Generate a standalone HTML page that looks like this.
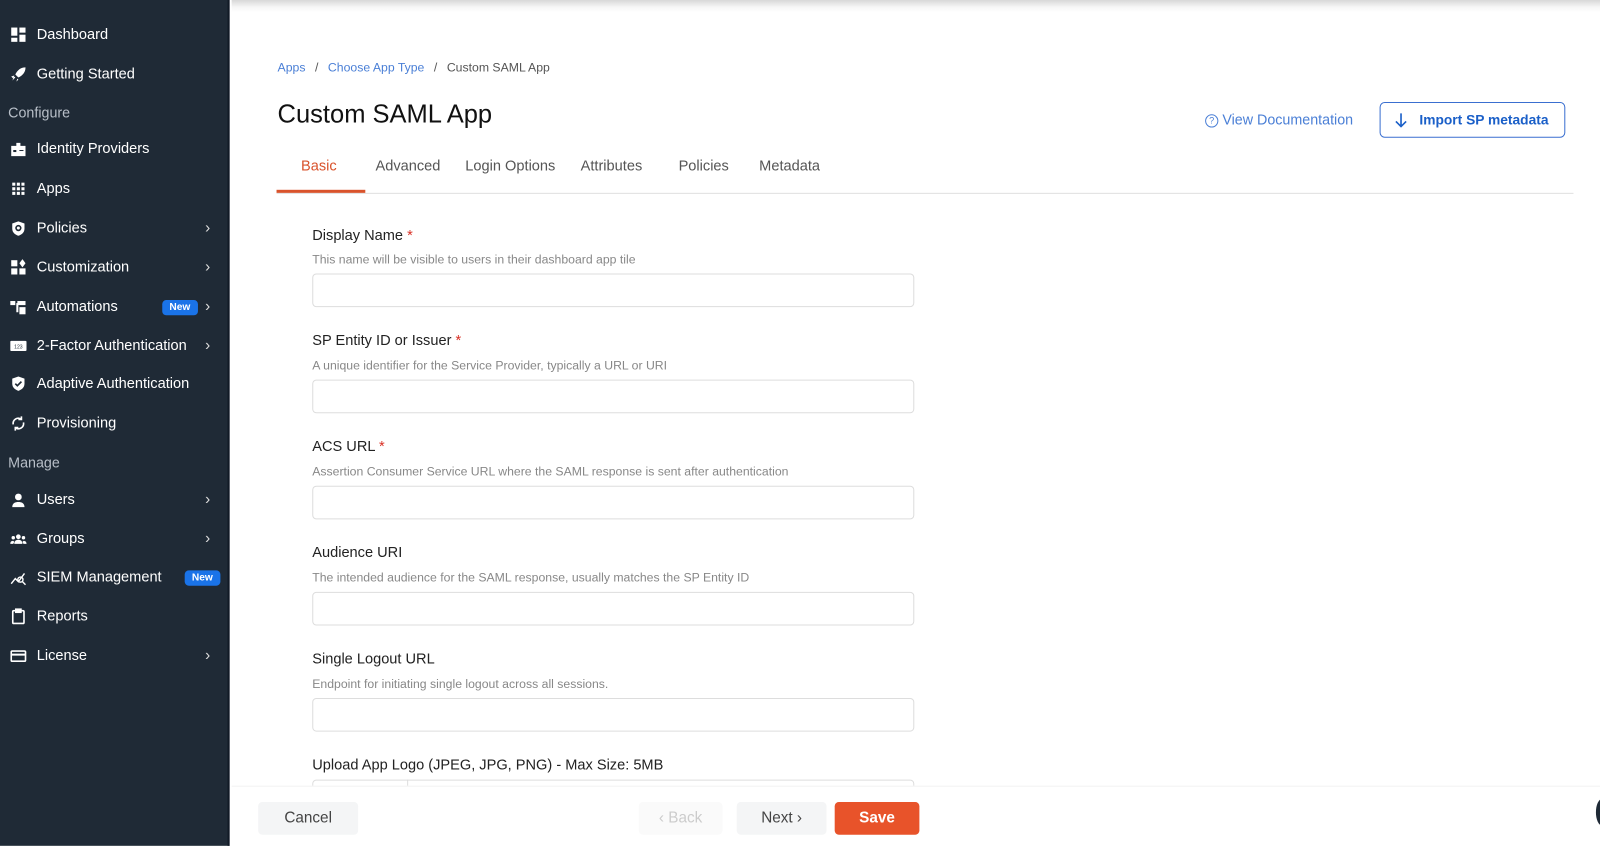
<!DOCTYPE html>
<html style="width:1600px;height:846px;overflow:hidden"><head><meta charset="utf-8"><style>
*{box-sizing:border-box;margin:0;padding:0}
body{width:1600px;height:846px;overflow:hidden;background:#fff;font-family:"Liberation Sans",sans-serif;position:relative}
#w{position:absolute;left:0;top:0;width:1568px;height:829px;overflow:hidden;transform:scale(1.020408);transform-origin:0 0}
.sb{position:absolute;left:0;top:0;width:225px;height:829px;background:#1f2a36;border-right:2px solid #111a26;color:#fff}
.it{position:absolute;left:0;width:225px;height:24px;font-size:14.3px;line-height:24px}
.it .ic{position:absolute;left:10px;top:4px;width:16px;height:16px}
.it .t{position:absolute;left:36px;top:0}
.it .ch{position:absolute;left:201px;top:0;font-size:15px;color:#ddd}
.sec{position:absolute;left:8px;font-size:14px;color:#b8bfc8}
.new{position:absolute;top:5px;height:15px;padding:0 7px;background:#1a73e8;border-radius:4px;font-size:10px;line-height:15px;font-weight:bold}
.topbar{position:absolute;left:227px;top:0;right:0;height:12px;background:linear-gradient(#d8d8d8,#f7f7f7 60%,#fff)}
.a{position:absolute;white-space:nowrap}
.lbl{font-size:14.3px;color:#222}
.lbl b{color:#d93025;font-weight:normal}
.hint{font-size:12px;color:#888}
.inp{position:absolute;left:306px;width:590px;height:33px;border:1px solid #ddd;border-radius:4px}
.tab{font-size:14.3px;color:#555;top:155px}
.btn{position:absolute;top:786px;height:32px;border-radius:4px;font-size:15px;line-height:32px;text-align:center}
</style></head><body><div id="w">
<div class="sb">
<div class="it" style="top:22px"><svg class="ic" viewBox="0 0 16 16" fill="#fff"><rect x="1" y="1" width="6" height="8"/><rect x="9" y="1" width="6" height="5"/><rect x="1" y="11" width="6" height="4"/><rect x="9" y="8" width="6" height="7"/></svg><span class="t">Dashboard</span></div>
<div class="it" style="top:61px"><svg class="ic" viewBox="0 0 16 16" fill="#fff"><path d="M15 1C10 1 7 4 5 8l3 3c4-2 7-5 7-10zM4 9l-3 1 2 2zM7 12l-1 3 2-2zM2 14l3-3-1-1z"/></svg><span class="t">Getting Started</span></div>
<div class="sec" style="top:102px">Configure</div>
<div class="it" style="top:134px"><svg class="ic" viewBox="0 0 16 16" fill="#fff"><path d="M1 5h14v10H1z M6 2h4v4H6z"/><rect x="3" y="9" width="3" height="2" fill="#1f2a36"/><rect x="9" y="9" width="4" height="1" fill="#1f2a36"/></svg><span class="t">Identity Providers</span></div>
<div class="it" style="top:173px"><svg class="ic" viewBox="0 0 16 16" fill="#fff"><rect x="2" y="2" width="3" height="3"/><rect x="6.5" y="2" width="3" height="3"/><rect x="11" y="2" width="3" height="3"/><rect x="2" y="6.5" width="3" height="3"/><rect x="6.5" y="6.5" width="3" height="3"/><rect x="11" y="6.5" width="3" height="3"/><rect x="2" y="11" width="3" height="3"/><rect x="6.5" y="11" width="3" height="3"/><rect x="11" y="11" width="3" height="3"/></svg><span class="t">Apps</span></div>
<div class="it" style="top:212px"><svg class="ic" viewBox="0 0 16 16"><path d="M8 1l6 2v5c0 4-3 6-6 7-3-1-6-3-6-7V3z" fill="#fff"/><circle cx="8" cy="7.5" r="2.3" fill="none" stroke="#1f2a36" stroke-width="1.6"/></svg><span class="t">Policies</span><span class="ch">›</span></div>
<div class="it" style="top:250px"><svg class="ic" viewBox="0 0 16 16" fill="#fff"><rect x="1" y="1" width="6" height="6"/><rect x="1" y="9" width="6" height="6"/><rect x="9" y="9" width="6" height="6"/><path d="M12 0l3 4-3 4-3-4z"/></svg><span class="t">Customization</span><span class="ch">›</span></div>
<div class="it" style="top:289px"><svg class="ic" viewBox="0 0 16 16" fill="#fff"><rect x="0" y="2" width="5" height="4"/><rect x="7" y="2" width="8" height="4"/><rect x="9" y="8" width="6" height="7"/><rect x="6" y="4" width="2" height="9"/></svg><span class="t">Automations</span><span class="new" style="left:159px">New</span><span class="ch">›</span></div>
<div class="it" style="top:327px"><svg class="ic" viewBox="0 0 16 16"><rect x="0" y="3" width="16" height="10" rx="1" fill="#fff"/><text x="8" y="10.5" font-size="5" text-anchor="middle" fill="#1f2a36" font-family="Liberation Sans">123</text></svg><span class="t">2-Factor Authentication</span><span class="ch">›</span></div>
<div class="it" style="top:364px"><svg class="ic" viewBox="0 0 16 16"><path d="M8 1l6 2v5c0 4-3 6-6 7-3-1-6-3-6-7V3z" fill="#fff"/><path d="M5 8l2 2 4-4" fill="none" stroke="#1f2a36" stroke-width="1.6"/></svg><span class="t">Adaptive Authentication</span></div>
<div class="it" style="top:403px"><svg class="ic" viewBox="0 0 16 16" fill="none" stroke="#fff" stroke-width="1.6"><path d="M3 9a5 5 0 0 1 8-5M13 7a5 5 0 0 1-8 5"/><path d="M11 1v3H8M5 15v-3h3"/></svg><span class="t">Provisioning</span></div>
<div class="sec" style="top:445px">Manage</div>
<div class="it" style="top:478px"><svg class="ic" viewBox="0 0 16 16" fill="#fff"><circle cx="8" cy="5" r="3.3"/><path d="M2 15c0-4 3-5 6-5s6 1 6 5z"/></svg><span class="t">Users</span><span class="ch">›</span></div>
<div class="it" style="top:516px"><svg class="ic" viewBox="0 0 16 16" fill="#fff"><circle cx="8" cy="6" r="2.3"/><circle cx="3" cy="7" r="1.7"/><circle cx="13" cy="7" r="1.7"/><path d="M4 13c0-3 2-4 4-4s4 1 4 4zM0 13c0-2 1-3 3-3l1 1-1 2zM16 13c0-2-1-3-3-3l-1 1 1 2z"/></svg><span class="t">Groups</span><span class="ch">›</span></div>
<div class="it" style="top:554px"><svg class="ic" viewBox="0 0 16 16" fill="none" stroke="#fff" stroke-width="1.4"><path d="M1 14l4-5 3 3 6-8"/><circle cx="10" cy="10" r="2.5"/><path d="M12 12l3 3"/></svg><span class="t">SIEM Management</span><span class="new" style="left:181px">New</span></div>
<div class="it" style="top:592px"><svg class="ic" viewBox="0 0 16 16" fill="none" stroke="#fff" stroke-width="1.6"><rect x="2.5" y="2.5" width="11" height="12.5" rx="1"/><rect x="5.5" y="1" width="5" height="3" fill="#fff"/></svg><span class="t">Reports</span></div>
<div class="it" style="top:631px"><svg class="ic" viewBox="0 0 16 16" fill="none" stroke="#fff" stroke-width="1.6"><rect x="1" y="3" width="14" height="10" rx="1"/><path d="M1 6.5h14" stroke-width="2"/></svg><span class="t">License</span><span class="ch">›</span></div>
</div>
<div class="topbar"></div>
<div class="a" style="left:272px;top:59px;font-size:12px;color:#4a7fd6">Apps <span style="color:#555;margin:0 6px">/</span> Choose App Type <span style="color:#555;margin:0 6px">/</span> <span style="color:#555">Custom SAML App</span></div>
<div class="a" style="left:272px;top:98px;font-size:25px;color:#111">Custom SAML App</div>
<div class="a" style="left:1181px;top:109px;font-size:14px;color:#4a7fd6"><span style="display:inline-block;width:13px;height:13px;border:1.3px solid #4a7fd6;border-radius:50%;font-size:9px;line-height:11px;text-align:center;vertical-align:1px">?</span> View Documentation</div>
<div class="a" style="left:1352px;top:100px;width:182px;height:35px;border:1px solid #3a6fd0;border-radius:5px;color:#1a5fc8;font-size:13.5px;font-weight:bold;line-height:33px;padding-left:38px">Import SP metadata<svg style="position:absolute;left:14px;top:10px" width="12" height="14" viewBox="0 0 12 14" fill="none" stroke="#1a5fc8" stroke-width="1.6"><path d="M6 0v13M1 8l5 5 5-5"/></svg></div>
<div class="a tab" style="left:295px;color:#d9532c">Basic</div>
<div class="a tab" style="left:368px">Advanced</div>
<div class="a tab" style="left:456px">Login Options</div>
<div class="a tab" style="left:569px">Attributes</div>
<div class="a tab" style="left:665px">Policies</div>
<div class="a tab" style="left:744px">Metadata</div>
<div class="a" style="left:271px;top:189px;width:1271px;height:1px;background:#e0e0e0"></div>
<div class="a" style="left:271px;top:186px;width:87px;height:3px;background:#d9532c"></div>

<div class="a lbl" style="left:306px;top:223px">Display Name <b>*</b></div>
<div class="a hint" style="left:306px;top:247px">This name will be visible to users in their dashboard app tile</div>
<div class="inp" style="top:268px"></div>
<div class="a lbl" style="left:306px;top:326px">SP Entity ID or Issuer <b>*</b></div>
<div class="a hint" style="left:306px;top:351px">A unique identifier for the Service Provider, typically a URL or URI</div>
<div class="inp" style="top:372px"></div>
<div class="a lbl" style="left:306px;top:430px">ACS URL <b>*</b></div>
<div class="a hint" style="left:306px;top:455px">Assertion Consumer Service URL where the SAML response is sent after authentication</div>
<div class="inp" style="top:476px"></div>
<div class="a lbl" style="left:306px;top:534px">Audience URI</div>
<div class="a hint" style="left:306px;top:559px">The intended audience for the SAML response, usually matches the SP Entity ID</div>
<div class="inp" style="top:580px"></div>
<div class="a lbl" style="left:306px;top:638px">Single Logout URL</div>
<div class="a hint" style="left:306px;top:663px">Endpoint for initiating single logout across all sessions.</div>
<div class="inp" style="top:684px"></div>
<div class="a lbl" style="left:306px;top:742px">Upload App Logo (JPEG, JPG, PNG) - Max Size: 5MB</div>
<div class="inp" style="top:764px;height:20px"></div>
<div class="a" style="left:399px;top:764px;width:1px;height:8px;background:#ddd"></div>

<div class="a" style="left:227px;top:770px;width:1341px;height:59px;background:#fff;border-top:1px solid #f2f2f2"></div>
<div class="btn" style="left:253px;width:98px;background:#f4f5f6;color:#444">Cancel</div>
<div class="btn" style="left:626px;width:82px;background:#fafafa;color:#ccc">‹ Back</div>
<div class="btn" style="left:722px;width:88px;background:#f4f5f6;color:#444">Next ›</div>
<div class="btn" style="left:818px;width:83px;background:#e8532a;color:#fff;font-weight:bold">Save</div>
<div class="a" style="left:1564px;top:783px;width:12px;height:26px;border-radius:50%;background:#1f2a36"></div>
</div></body></html>
